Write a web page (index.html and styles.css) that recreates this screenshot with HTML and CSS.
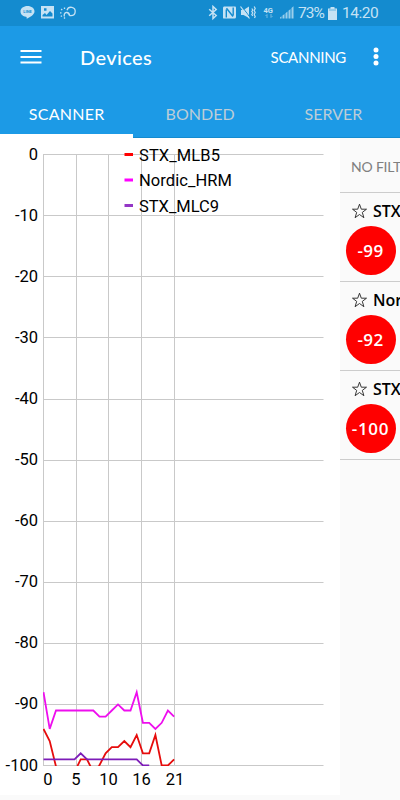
FILE: index.html
```html
<!DOCTYPE html>
<html lang="en">
<head>
<meta charset="utf-8">
<title>Devices</title>
<link rel="stylesheet" href="styles.css">
</head>
<body>
<header class="statusbar">
  <svg class="notifications" width="58" height="16" viewBox="0 0 58 16">
    <path d="M7.5 1C3.6 1 .5 3.3 .5 6.4c0 3 2.5 4.9 5.5 5.3.9.2.7 1.2.7 2 2.7-1.2 7.8-4.1 7.8-7.3C14.500 3.300 11.400 1 7.500 1z" fill="#c5e2f4"/>
    <text class="line-label" x="7.500" y="8.300" text-anchor="middle">LINE</text>
    <path fill-rule="evenodd" d="M21 1h13v12.500H21zM22.500 11.500h10V8.500L30 6l-3.500 4-1.500-2-2.500 2zM24 3.200v2.500h2.500V3.200z" fill="#c5e2f4"/>
    <g fill="none" stroke="#c5e2f4" stroke-width="1.300">
      <path d="M49.500 10.700h1.500a4.200 4.200 0 1 0-4-5.500M49.500 10.700a2.700 2.700 0 1 0-5 .8M49.500 10.700a3 3 0 0 0-2-2.500M44.500 2.500v1.500M41.200 4l1 1.200M40 7.800h1.500M40.800 11.500l1.200-.8M44.500 12.200v1.500"/>
    </g>
  </svg>
  <svg class="system" width="89" height="16" viewBox="0 0 89 16">
    <path d="M1.200 4.200l7 6.300-3.200 3V1.500l3.200 3-7 6.300" fill="none" stroke="#c5e2f4" stroke-width="1.500"/>
    <path d="M16 1.500h11q1 0 1 1V12q0 1.500-1.500 1.500h-11q-.5 0-.5-1V3q0-1.500 1-1.500z" fill="#c5e2f4"/>
    <path d="M18.300 12.500V4.500M18.500 3.300l6.500 8.200M25.200 10.500V2.500" fill="none" stroke="#148bcf" stroke-width="1.400"/>
    <path d="M33 5h2.500L41 1.500V13l-5.500-3H33z" fill="#c5e2f4"/>
    <path d="M33.500 1l9 12" stroke="#148bcf" stroke-width="1"/><path d="M32.500 1.500l9 12" stroke="#c5e2f4" stroke-width="1.200"/>
    <path d="M43.800 3.500l1 1.500-1 1.500 1 1.500-1 1.500 1 1.500M46.200 1.500l1 2-1 2 1 2-1 2 1 2-.7 1.500" fill="none" stroke="#c5e2f4" stroke-width="1.200"/>
    <text class="net-label" x="55.500" y="7.500">4G</text>
    <path d="M59 13V9.500l-1.500 1.500M63 9v3.500l1.500-1.500" fill="none" stroke="#70b9e2"/>
    <path d="M72 13.500v-1l1.500-1.200v2.200zM74.500 13.500v-3l2-1.500v4.500zM77.500 13.500V8.200l2-1.600v6.900zM80.500 13.500V5.700l2-1.600v9.400zM83.500 13.500V3l2-1.700v12.200z" fill="#9bcfec"/>
  </svg>
  <span class="percent">73%</span>
  <svg class="battery" width="9" height="13" viewBox="0 0 9 13">
    <path d="M2.500 0h4v1.500H9V13H0V1.500h2.500z" fill="#c5e2f4"/><path d="M1 3h7" stroke="#65b4df"/>
  </svg>
  <span class="clock">14:20</span>
</header>
<div class="toolbar">
  <svg class="menu" width="22" height="16" viewBox="0 0 22 16"><path d="M.5 2h21M.5 8h21M.5 13.500h21" stroke="#fff" stroke-width="2"/></svg>
  <h1 class="title">Devices</h1>
  <span class="action">SCANNING</span>
  <svg class="more" width="6" height="20" viewBox="0 0 6 20"><g fill="#fff"><circle cx="3" cy="3" r="2.500"/><circle cx="3" cy="9.500" r="2.500"/><circle cx="3" cy="16" r="2.500"/></g></svg>
</div>
<nav class="tabs">
  <span class="tab active">SCANNER</span>
  <span class="tab">BONDED</span>
  <span class="tab">SERVER</span>
</nav>
<main class="content">
  <svg class="chart" width="340" height="657" viewBox="0 138 340 657">
    <defs><clipPath id="plot"><rect x="43" y="154" width="281" height="612"/></clipPath></defs>
    <g class="grid">
      <path d="M43 154.500H323.500M43 215.500H323.500M43 276.500H323.500M43 337.500H323.500M43 399.500H323.500M43 460.500H323.500M43 521.500H323.500M43 582.500H323.500M43 643.500H323.500M43 704.500H323.500M43 765.500H323.500"/>
      <path d="M43.500 154V766M76.500 154V766M108.500 154V766M141.500 154V766M174.500 154V766"/>
    </g>
    <g class="axis" text-anchor="end">
      <text x="38" y="160">0</text><text x="38" y="221">-10</text><text x="38" y="282">-20</text><text x="38" y="343">-30</text>
      <text x="38" y="404">-40</text><text x="38" y="465">-50</text><text x="38" y="526">-60</text><text x="38" y="587">-70</text>
      <text x="38" y="648">-80</text><text x="38" y="709">-90</text><text x="38" y="771">-100</text>
    </g>
    <g class="axis" text-anchor="middle">
      <text x="48" y="785">0</text><text x="76" y="785">5</text><text x="108.500" y="785">10</text><text x="141.500" y="785">16</text><text x="175" y="785">21</text>
    </g>
    <g class="series" clip-path="url(#plot)">
      <polyline stroke="#e60c0c" points="43.500,729 49.700,741 56,766.500 62,778 74.500,772 80.700,759.400 87,759.400 93.300,772 99.300,765.500 105.600,753.300 111.800,747.200 118,747.200 124.300,741.100 130.500,747.200 136.700,735 142.900,753.300 149.200,753.300 155.400,735 161.700,765.500 167.900,765.500 174.100,759.400"/>
      <polyline stroke="#ee0eee" points="43.500,692.200 49.700,728.900 56,710.500 93.300,710.500 99.500,716.600 105.600,716.600 111.800,710.500 118,704.400 124.300,710.500 130.500,710.500 136.700,692.200 142.900,722.800 149.200,722.800 155.400,728.900 161.700,722.800 167.900,710.500 174.100,716.600"/>
      <polyline stroke="#7d1cb8" points="43.500,759.400 74.500,759.400 80.700,753.300 87,759.400 136.700,759.400 142.900,765.500 149.200,765.500"/>
    </g>
    <g class="legend">
      <path d="M124.500 154.500h8.500" stroke="#f00"/><path d="M124.500 180h8.500" stroke="#f0f"/><path d="M124.500 205.500h8.500" stroke="#9436c6"/>
      <text x="139" y="161" textLength="81">STX_MLB5</text>
      <text x="139" y="186" textLength="93">Nordic_HRM</text>
      <text x="139" y="211.500" textLength="80">STX_MLC9</text>
    </g>
  </svg>
  <aside class="devices">
    <div class="filter">NO FILTER</div>
    <section class="device"><div class="name"><svg class="star" width="17" height="16" viewBox="0 0 17 16"><path d="M8.500 1.200l1.800 5h5.200l-4.200 3.200 1.600 5.300-4.400-3.200-4.400 3.200 1.600-5.300L1.500 6.200h5.200z"/></svg>STX_MLB5</div><div class="rssi">-99</div></section>
    <section class="device"><div class="name"><svg class="star" width="17" height="16" viewBox="0 0 17 16"><path d="M8.500 1.200l1.800 5h5.200l-4.200 3.200 1.600 5.300-4.400-3.200-4.400 3.200 1.600-5.300L1.500 6.200h5.200z"/></svg>Nordic_HRM</div><div class="rssi">-92</div></section>
    <section class="device"><div class="name"><svg class="star" width="17" height="16" viewBox="0 0 17 16"><path d="M8.500 1.200l1.800 5h5.200l-4.200 3.200 1.600 5.300-4.400-3.200-4.400 3.200 1.600-5.300L1.500 6.200h5.200z"/></svg>STX_MLC9</div><div class="rssi wide">-100</div></section>
  </aside>
</main>
</body>
</html>
```
FILE: styles.css
```css
* { box-sizing: border-box; }
body { margin: 0; width: 400px; height: 800px; overflow: hidden; background: #fafafa; font-family: Roboto, sans-serif; }
.statusbar { height: 26px; background: #148bcf; color: #c5e2f4; display: flex; align-items: center; padding-left: 20px; }
.notifications { flex: none; }
.system { flex: none; margin-left: 130px; }
.line-label { font: bold 4px Roboto, sans-serif; fill: #148bcf; }
.net-label { font: bold 7.500px Roboto, sans-serif; fill: #c5e2f4; }
.percent { width: 29px; margin-left: 1px; letter-spacing: -.9px; font-size: 15.500px; }
.battery { flex: none; margin-left: 1px; }
.clock { margin-left: 5px; font-size: 15.500px; letter-spacing: -.5px; }
.toolbar { height: 62px; background: #1c9ae6; color: #fff; display: flex; align-items: center; padding: 0 21px 0 20px; }
.title { margin: 0 0 0 38px; font: 500 20px Lato, sans-serif; letter-spacing: .4px; }
.action { margin-left: auto; margin-right: 27px; font: 15px Lato, sans-serif; letter-spacing: -.3px; }
.more { flex: none; }
.tabs { height: 50px; background: #1c9ae6; display: flex; }
.tab { width: 133.4px; flex: none; display: flex; align-items: center; justify-content: center; color: #bdcdd7; font-family: Lato, sans-serif; font-size: 16px; border-bottom: 1px solid #148bcf; padding-top: 1px; }
.active { color: #fff; border-bottom: 4px solid #fff; padding-top: 4px; letter-spacing: .3px; }
.content { display: flex; height: 662px; }
.chart { flex: none; background: #fff; }
.grid { stroke: #c9c9c9; stroke-width: 1; fill: none; }
.axis { font-size: 16.500px; fill: #000; }
.legend { font-size: 16.500px; fill: #000; stroke-width: 3; }
.legend text { stroke: none; }
.series { fill: none; stroke-width: 1.800; }
.devices { width: 60px; overflow: hidden; white-space: nowrap; }
.filter { height: 55px; padding: 19px 0 0 11px; color: #808080; font: 14px/20px Lato, sans-serif; letter-spacing: -.2px; border-bottom: 1px solid #ccc; }
.device { height: 89px; border-bottom: 1px solid #ccc; padding: 6px 0 0 5.500px; }
.name { height: 27px; display: flex; gap: 5px; padding-left: 5.500px; font: 600 16px/24px "Open Sans", sans-serif; color: #000; }
.star { flex: none; margin-top: 4px; fill: none; stroke: #222; stroke-width: .9; }
.rssi { width: 50px; height: 49px; border-radius: 50%; background: #f00; color: #fff; display: flex; align-items: center; justify-content: center; padding-bottom: 1px; font: 600 17px "Open Sans", sans-serif; letter-spacing: .3px; }
.wide { letter-spacing: .7px; }
```
